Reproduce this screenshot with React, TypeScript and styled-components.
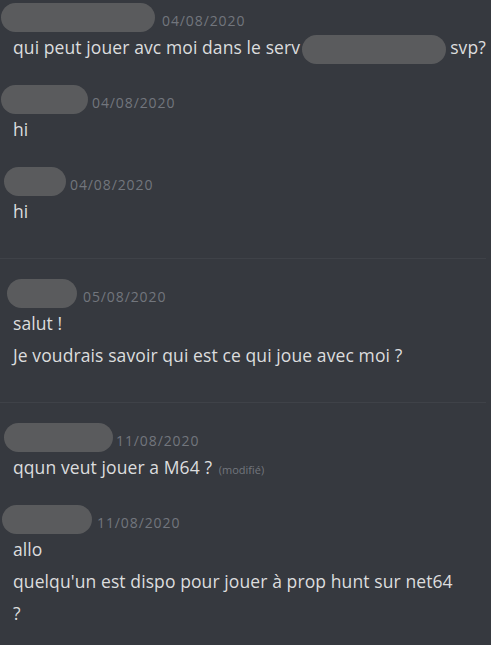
import React from "react";
import styled, { createGlobalStyle } from "styled-components";

const Global = createGlobalStyle`
  html, body {
    margin: 0;
    background: #36393f;
  }
  body {
    font-family: "Open Sans", "Noto Sans", sans-serif;
    width: 491px;
    height: 645px;
    overflow: hidden;
  }
`;

const Chat = styled.div`
  display: flex;
  flex-direction: column;
  padding-top: 3px;
`;

const Section = styled.div`
  display: flex;
  flex-direction: column;
  gap: 22px;
`;

const Message = styled.div`
  display: flex;
  flex-direction: column;
`;

const Header = styled.div`
  display: flex;
  align-items: center;
  height: 28px;
`;

const Name = styled.div<{ $w: number; $shift: number; $gap: number }>`
  flex: none;
  width: ${({ $w }) => $w}px;
  height: 29px;
  margin-left: ${({ $shift }) => $shift}px;
  margin-right: ${({ $gap }) => $gap}px;
  border-radius: 15px;
  background: #5a5b5d;
  filter: blur(0.7px);
`;

const Stamp = styled.span`
  align-self: flex-start;
  margin-top: 4px;
  font-size: 14px;
  line-height: 28px;
  letter-spacing: 0.9px;
  color: #72767d;
`;

const Line = styled.div`
  height: 32px;
  padding-left: 13px;
  font-size: 17.5px;
  line-height: 33px;
  letter-spacing: 0.1px;
  color: #dcddde;
  white-space: nowrap;
`;

const Hidden = styled.span<{ $w: number }>`
  display: inline-block;
  width: ${({ $w }) => $w}px;
  height: 29px;
  margin: 0 4px 0 2px;
  vertical-align: middle;
  border-radius: 15px;
  background: #5a5b5d;
  filter: blur(0.7px);
`;

const Edited = styled.span`
  margin-left: 2px;
  font-size: 11px;
  line-height: 1;
  letter-spacing: 0;
  color: #72767d;
`;

const Divider = styled.div`
  height: 1px;
  width: 486px;
  background: #3f4248;
  margin: 31px 0 20px;
`;

const S = {
  Chat,
  Section,
  Message,
  Header,
  Name,
  Stamp,
  Line,
  Hidden,
  Edited,
  Divider,
};

type Msg = {
  name: [number, number, number]; // width, left shift, gap to the date
  date: string;
  lines: React.ReactNode[];
};

const groups: Msg[][] = [
  [
    {
      name: [154, 1, 7],
      date: "04/08/2020",
      lines: [
        <>
          qui peut jouer avc moi dans le serv<S.Hidden $w={144} />svp?
        </>,
      ],
    },
    { name: [87, 1, 4], date: "04/08/2020", lines: ["hi"] },
    { name: [62, 4, 4], date: "04/08/2020", lines: ["hi"] },
  ],
  [
    {
      name: [70, 7, 6],
      date: "05/08/2020",
      lines: ["salut !", "Je voudrais savoir qui est ce qui joue avec moi ?"],
    },
  ],
  [
    {
      name: [109, 4, 3],
      date: "11/08/2020",
      lines: [
        <>
          qqun veut jouer a M64 ? <S.Edited>(modifié)</S.Edited>
        </>,
      ],
    },
    {
      name: [90, 2, 5],
      date: "11/08/2020",
      lines: ["allo", "quelqu'un est dispo pour jouer à prop hunt sur net64", "?"],
    },
  ],
];

function App() {
  return (
    <S.Chat>
      <Global />
      {groups.map((g, gi) => (
        <React.Fragment key={gi}>
          {gi > 0 && <S.Divider />}
          <S.Section>
            {g.map((m, mi) => (
              <S.Message key={mi}>
                <S.Header>
                  <S.Name $w={m.name[0]} $shift={m.name[1]} $gap={m.name[2]} />
                  <S.Stamp>{m.date}</S.Stamp>
                </S.Header>
                {m.lines.map((l, li) => (
                  <S.Line key={li}>{l}</S.Line>
                ))}
              </S.Message>
            ))}
          </S.Section>
        </React.Fragment>
      ))}
    </S.Chat>
  );
}
export default App;
